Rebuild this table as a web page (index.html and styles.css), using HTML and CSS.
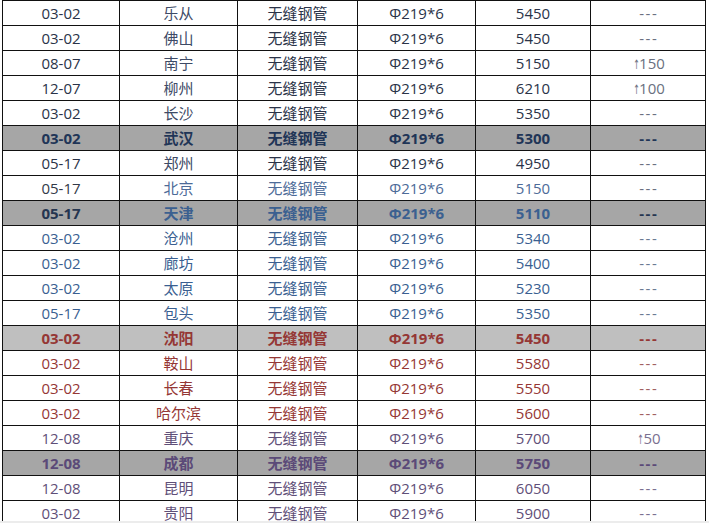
FILE: index.html
```html
<!DOCTYPE html>
<html lang="zh-CN">
<head>
<meta charset="utf-8">
<title>无缝钢管价格</title>
<link rel="stylesheet" href="styles.css">
</head>
<body>
<div class="frame">
<table class="prices">
<colgroup>
<col class="c-date"><col class="c-city"><col class="c-name"><col class="c-spec"><col class="c-price"><col class="c-chg">
</colgroup>
<tbody>
<tr class="g-dark"><td>03-02</td><td class="city">乐从</td><td>无缝钢管</td><td>Φ219*6</td><td>5450</td><td class="chg dash">---</td></tr>
<tr class="g-dark"><td>03-02</td><td class="city">佛山</td><td>无缝钢管</td><td>Φ219*6</td><td>5450</td><td class="chg dash">---</td></tr>
<tr class="g-dark"><td>08-07</td><td class="city">南宁</td><td>无缝钢管</td><td>Φ219*6</td><td>5150</td><td class="chg"><span class="arrow">↑</span>150</td></tr>
<tr class="g-dark"><td>12-07</td><td class="city">柳州</td><td>无缝钢管</td><td>Φ219*6</td><td>6210</td><td class="chg"><span class="arrow">↑</span>100</td></tr>
<tr class="g-dark"><td>03-02</td><td class="city">长沙</td><td>无缝钢管</td><td>Φ219*6</td><td>5350</td><td class="chg dash">---</td></tr>
<tr class="hl hl-navy"><td>03-02</td><td>武汉</td><td>无缝钢管</td><td>Φ219*6</td><td>5300</td><td class="dash">---</td></tr>
<tr class="g-dark"><td>05-17</td><td class="city">郑州</td><td>无缝钢管</td><td>Φ219*6</td><td>4950</td><td class="chg dash">---</td></tr>
<tr class="g-mix"><td class="d">05-17</td><td>北京</td><td>无缝钢管</td><td>Φ219*6</td><td>5150</td><td class="chg dash">---</td></tr>
<tr class="hl hl-blue"><td class="d">05-17</td><td>天津</td><td>无缝钢管</td><td>Φ219*6</td><td>5110</td><td class="d dash">---</td></tr>
<tr class="g-blue"><td>03-02</td><td>沧州</td><td>无缝钢管</td><td>Φ219*6</td><td>5340</td><td class="chg dash">---</td></tr>
<tr class="g-blue"><td>03-02</td><td>廊坊</td><td>无缝钢管</td><td>Φ219*6</td><td>5400</td><td class="chg dash">---</td></tr>
<tr class="g-blue"><td>03-02</td><td>太原</td><td>无缝钢管</td><td>Φ219*6</td><td>5230</td><td class="chg dash">---</td></tr>
<tr class="g-blue"><td>05-17</td><td>包头</td><td>无缝钢管</td><td>Φ219*6</td><td>5350</td><td class="chg dash">---</td></tr>
<tr class="hl hl-red"><td>03-02</td><td>沈阳</td><td>无缝钢管</td><td>Φ219*6</td><td>5450</td><td class="dash">---</td></tr>
<tr class="g-red"><td>03-02</td><td>鞍山</td><td>无缝钢管</td><td>Φ219*6</td><td>5580</td><td class="chg dash">---</td></tr>
<tr class="g-red"><td>03-02</td><td>长春</td><td>无缝钢管</td><td>Φ219*6</td><td>5550</td><td class="chg dash">---</td></tr>
<tr class="g-red"><td>03-02</td><td>哈尔滨</td><td>无缝钢管</td><td>Φ219*6</td><td>5600</td><td class="chg dash">---</td></tr>
<tr class="g-purple"><td>12-08</td><td>重庆</td><td>无缝钢管</td><td>Φ219*6</td><td>5700</td><td class="chg"><span class="arrow">↑</span>50</td></tr>
<tr class="hl hl-purple"><td>12-08</td><td>成都</td><td>无缝钢管</td><td>Φ219*6</td><td>5750</td><td class="dash">---</td></tr>
<tr class="g-purple"><td>12-08</td><td>昆明</td><td>无缝钢管</td><td>Φ219*6</td><td>6050</td><td class="chg dash">---</td></tr>
<tr class="g-purple"><td>03-02</td><td>贵阳</td><td>无缝钢管</td><td>Φ219*6</td><td>5900</td><td class="chg dash">---</td></tr>
</tbody>
</table>
</div>
<div class="edge"></div>
</body>
</html>
```
FILE: styles.css
```css
html, body {
  margin: 0;
  padding: 0;
  background: #ffffff;
}
body {
  font-family: "Open Sans", "Noto Sans CJK SC", sans-serif;
  font-size: 15px;
}
.frame {
  height: 521px;
  overflow: hidden;
  padding-left: 2px;
}
.edge {
  height: 2px;
  background: #ececec;
}
.prices {
  border-collapse: collapse;
  table-layout: fixed;
  width: 704px;
}
.c-date { width: 117px; }
.c-city { width: 118px; }
.c-name { width: 120px; }
.c-spec { width: 118px; }
.c-price { width: 115px; }
.c-chg { width: 115px; }
.prices tr {
  height: 25px;
}
.prices td {
  border: 1px solid #111;
  height: 24px;
  padding: 0 0 1px 0;
  box-sizing: border-box;
  text-align: center;
  vertical-align: middle;
  line-height: 18px;
  white-space: nowrap;
  overflow: hidden;
}
.prices td.dash {
  letter-spacing: 1.5px;
  text-indent: 1.5px;
}
.chg { color: #555; }
.arrow {
  font-family: "DejaVu Sans", sans-serif;
  font-size: 13px;
  line-height: 13px;
  display: inline-block;
  transform: scaleX(0.6);
  margin-right: -3px;
}

.g-dark td { color: #2a3348; }
.g-dark td.city { color: #3d4a66; }
.g-dark td.chg { color: #6a7080; }

.g-mix td { color: #4d6b98; }
.g-mix td.d { color: #333a48; }
.g-mix td.chg { color: #6a7080; }

.g-blue td { color: #3a5f91; }
.g-blue td.chg { color: #6a7a92; }

.g-red td { color: #953735; }
.g-red td.chg { color: #a06060; }

.g-purple td { color: #5f4f78; }
.g-purple td.chg { color: #7a7090; }

.hl td { font-weight: 700; }
.hl-navy td { background: #a6a6a6; color: #1f3557; }
.hl-blue td { background: #a6a6a6; color: #3b6090; }
.hl-blue td.d { color: #253550; }
.hl-red td { background: #bfbfbf; color: #953735; }
.hl-purple td { background: #a6a6a6; color: #5b4a78; }
```
